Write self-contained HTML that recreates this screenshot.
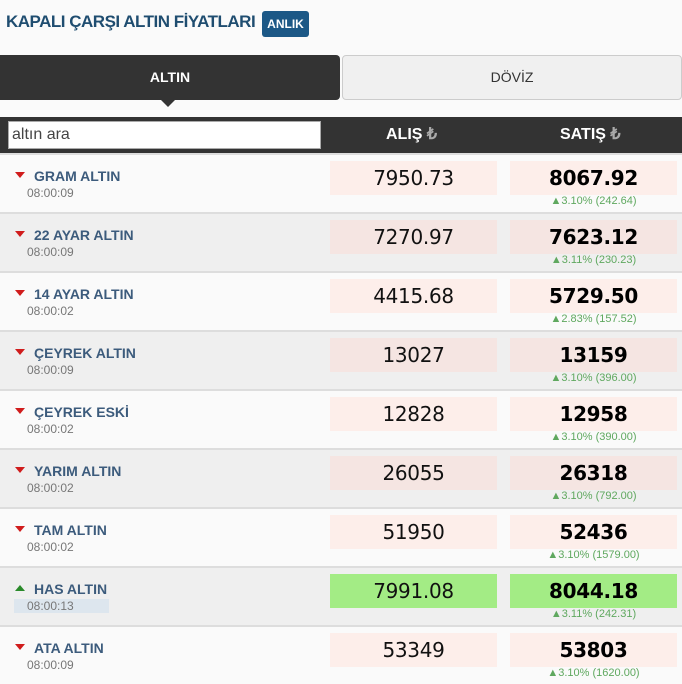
<!DOCTYPE html>
<html><head><meta charset="utf-8"><style>
*{margin:0;padding:0;box-sizing:border-box}
body{width:682px;height:681px;overflow:hidden;background:#fafafa;font-family:"Liberation Sans",sans-serif;position:relative}
.t{position:absolute;left:6px;top:12px;font-size:17px;font-weight:bold;color:#1f4d70;letter-spacing:-0.5px}
.b{position:absolute;left:262px;top:11px;width:47px;height:26px;background:#1c5886;border-radius:3px;color:#fff;font-size:12px;font-weight:bold;text-align:center;line-height:26px}
.tab1{position:absolute;left:0;top:55px;width:340px;height:45px;background:#333;border-radius:0 4px 4px 0;color:#fff;font-weight:bold;font-size:14px;text-align:center;line-height:45px}
.arr{position:absolute;left:161px;top:100px;border:7px solid transparent;border-top-color:#333;border-bottom:0}
.tab2{position:absolute;left:342px;top:55px;width:340px;height:45px;background:#f0f0f0;border:1px solid #ccc;border-radius:4px;color:#333;font-size:14px;text-align:center;line-height:43px}
.hd{position:absolute;left:0;top:117px;width:682px;height:36px;background:#333}
.in{position:absolute;left:8px;top:121px;width:313px;height:28px;background:#fff;border:1px solid #aaa;font-size:16px;color:#444;padding-left:3px;line-height:26px}
.h{position:absolute;top:117px;line-height:36px;color:#fff;font-weight:bold;font-size:16px}
.h span{color:#aaa}
.r{position:absolute;left:0;width:682px;height:59px;border-top:2px solid #ddd}
.r.g{background:#efefef}
.n{position:absolute;left:34px;top:13px;font-size:14px;font-weight:bold;color:#3c5b7c}
.ic{position:absolute;left:15px;top:17px;width:0;height:0}
.dn{border-left:5px solid transparent;border-right:5px solid transparent;border-top:6px solid #d01c1c}
.up{border-left:5px solid transparent;border-right:5px solid transparent;border-bottom:6px solid #2a8a2a}
.tm{position:absolute;left:27px;top:31px;font-size:12px;color:#777}
.bx{position:absolute;top:6px;height:34px;background:#fdeeea;font-size:20px;text-align:center;line-height:34px;color:#111;font-family:"DejaVu Sans","Liberation Sans",sans-serif;letter-spacing:-0.3px}
.g .bx{background:#f5e5e2}
.by{left:330px;width:167px}
.sl{left:510px;width:167px;font-weight:bold;color:#000}
.ch{position:absolute;left:510px;width:167px;top:40px;text-align:center;font-size:11px;color:#5fa85f}
.gr{background:#a3ec85!important}
</style></head><body>
<div class="t">KAPALI ÇARŞI ALTIN FİYATLARI</div><div class="b">ANLIK</div>
<div class="tab1">ALTIN</div><div class="arr"></div>
<div class="tab2">DÖVİZ</div>
<div class="hd"></div><div class="in">altın ara</div>
<div class="h" style="left:386px">ALIŞ <span>₺</span></div>
<div class="h" style="left:560px">SATIŞ <span>₺</span></div>

<div class="r" style="top:153px"><div class="ic dn"></div><div class="n">GRAM ALTIN</div><div class="tm">08:00:09</div><div class="bx by">7950.73</div><div class="bx sl">8067.92</div><div class="ch">▲3.10% (242.64)</div></div>
<div class="r g" style="top:212px"><div class="ic dn"></div><div class="n">22 AYAR ALTIN</div><div class="tm">08:00:09</div><div class="bx by">7270.97</div><div class="bx sl">7623.12</div><div class="ch">▲3.11% (230.23)</div></div>
<div class="r" style="top:271px"><div class="ic dn"></div><div class="n">14 AYAR ALTIN</div><div class="tm">08:00:02</div><div class="bx by">4415.68</div><div class="bx sl">5729.50</div><div class="ch">▲2.83% (157.52)</div></div>
<div class="r g" style="top:330px"><div class="ic dn"></div><div class="n">ÇEYREK ALTIN</div><div class="tm">08:00:09</div><div class="bx by">13027</div><div class="bx sl">13159</div><div class="ch">▲3.10% (396.00)</div></div>
<div class="r" style="top:389px"><div class="ic dn"></div><div class="n">ÇEYREK ESKİ</div><div class="tm">08:00:02</div><div class="bx by">12828</div><div class="bx sl">12958</div><div class="ch">▲3.10% (390.00)</div></div>
<div class="r g" style="top:448px"><div class="ic dn"></div><div class="n">YARIM ALTIN</div><div class="tm">08:00:02</div><div class="bx by">26055</div><div class="bx sl">26318</div><div class="ch">▲3.10% (792.00)</div></div>
<div class="r" style="top:507px"><div class="ic dn"></div><div class="n">TAM ALTIN</div><div class="tm">08:00:02</div><div class="bx by">51950</div><div class="bx sl">52436</div><div class="ch">▲3.10% (1579.00)</div></div>
<div class="r g" style="top:566px"><div class="ic up"></div><div class="n">HAS ALTIN</div><div class="tm" style="left:14px;background:#dde6ee;width:95px;padding-left:13px">08:00:13</div><div class="bx by gr">7991.08</div><div class="bx sl gr">8044.18</div><div class="ch">▲3.11% (242.31)</div></div>
<div class="r" style="top:625px"><div class="ic dn"></div><div class="n">ATA ALTIN</div><div class="tm">08:00:09</div><div class="bx by">53349</div><div class="bx sl">53803</div><div class="ch">▲3.10% (1620.00)</div></div>
</body></html>
